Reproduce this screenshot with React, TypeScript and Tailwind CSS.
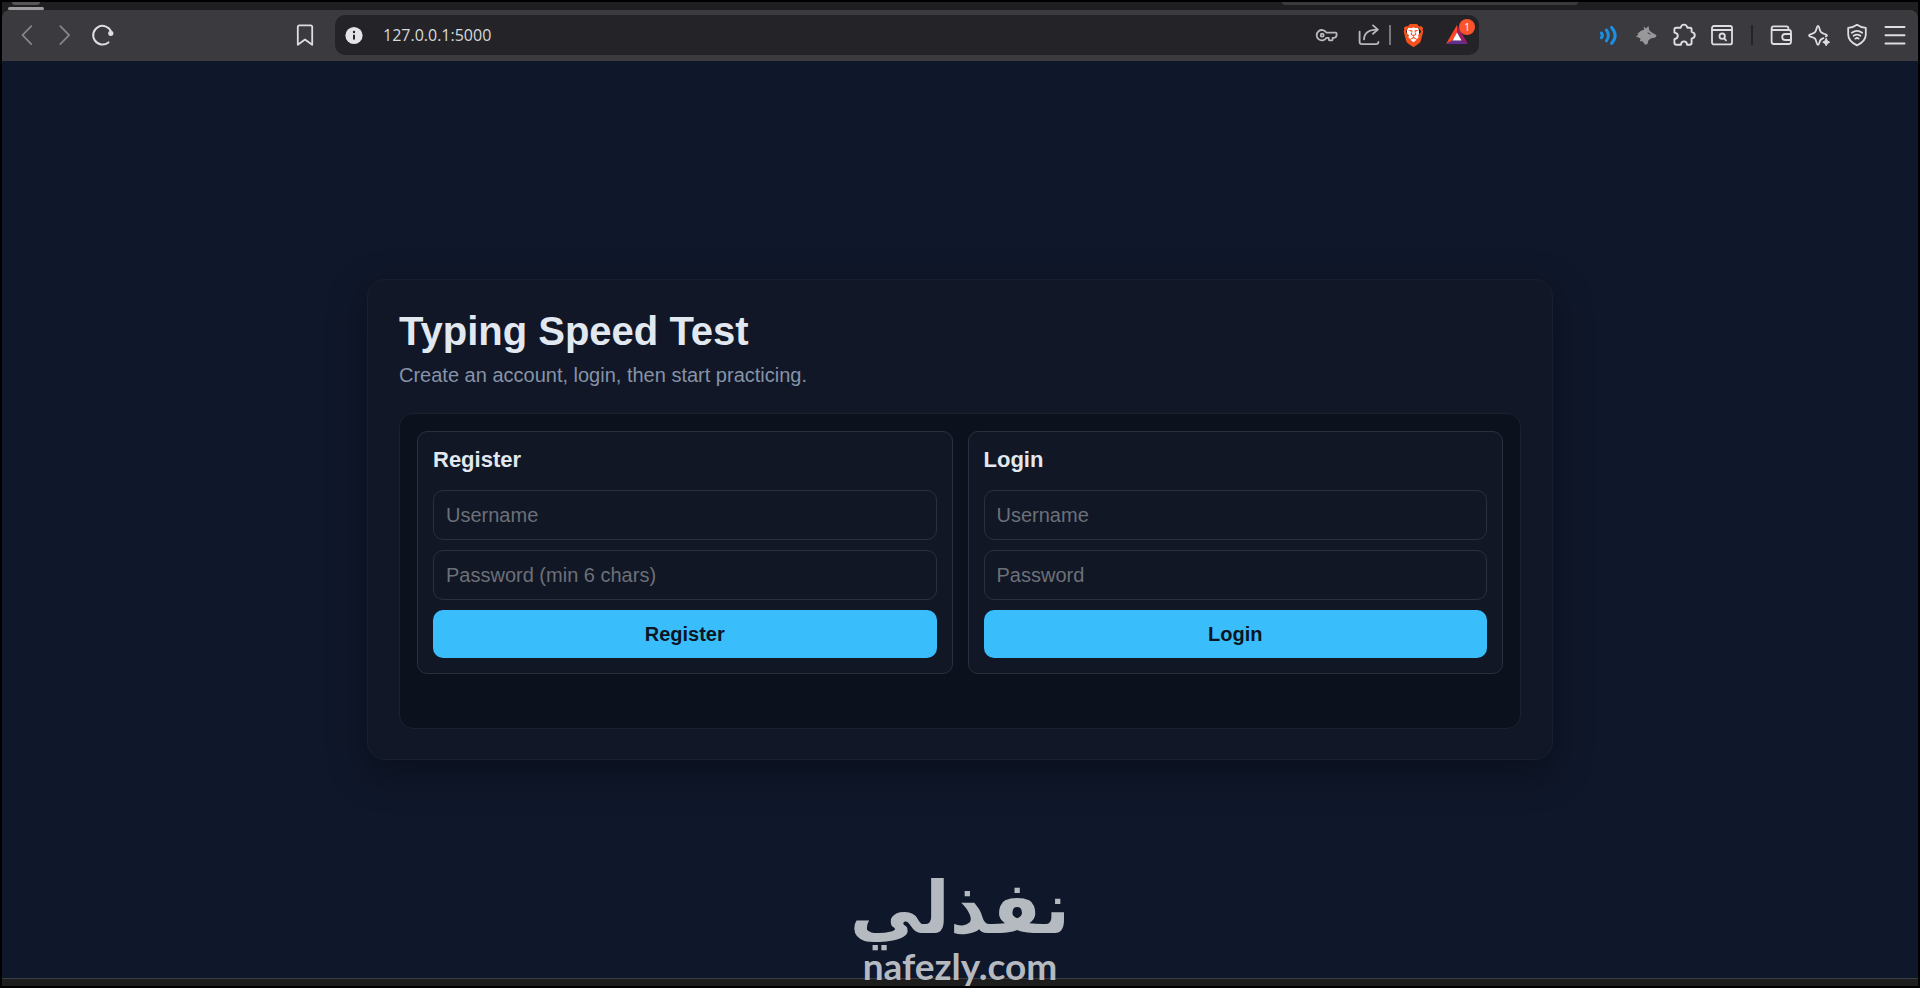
/**
 * App.tsx
 * Typing Speed Test: register / login screen inside the browser window.
 */

import React, { useState } from 'react';
import { SiBrave } from 'react-icons/si';

const TOOL_BUTTON = 'flex h-10 w-[38px] shrink-0 items-center justify-center text-[#dedee2]';

interface IconProps {
  children: React.ReactNode;
  className?: string;
  strokeWidth?: number;
}

const Icon: React.FC<IconProps> = ({ children, className = '', strokeWidth = 1.7 }) => (
  <svg
    viewBox="0 0 24 24"
    className={`h-6 w-6 ${className}`}
    fill="none"
    stroke="currentColor"
    strokeWidth={strokeWidth}
    strokeLinecap="round"
    strokeLinejoin="round"
    aria-hidden="true"
  >
    {children}
  </svg>
);

const TabStrip: React.FC = () => (
  <div className="flex h-2 items-start justify-between bg-[#1f1f22]">
    <div className="ml-1.5 w-9">
      <div className="mx-1 h-[3px] rounded-b bg-[#56565a]" />
      <div className="mt-0.5 h-[3px] rounded-sm bg-[#9b9b9e]" />
    </div>
    <div className="mr-[340px] h-[3px] w-[296px] rounded-b-lg bg-[#3b3b3f]" />
  </div>
);

const AddressBar: React.FC = () => (
  <div className="flex h-10 min-w-0 flex-1 items-center rounded-[10px] bg-[#242428]">
    <button type="button" aria-label="Site information" className={TOOL_BUTTON}>
      <Icon>
        <circle cx="12" cy="12.5" r="8.6" fill="#e4e4e8" stroke="none" />
        <path d="M12 11.8v4.6" stroke="#242428" strokeWidth="2" strokeLinecap="butt" />
        <circle cx="12" cy="9" r="1.2" fill="#242428" stroke="none" />
      </Icon>
    </button>
    <input
      aria-label="Address"
      defaultValue="127.0.0.1:5000"
      className="min-w-0 flex-1 bg-transparent pl-2.5 font-['Open_Sans',sans-serif] text-base text-[#d8d8dc] outline-none"
    />
    <button type="button" aria-label="Passwords" className="flex w-11 shrink-0 items-center justify-center text-[#b9b9bd]">
      <Icon strokeWidth={1.8}>
        <path d="M11.4 9.6A5.2 5.2 0 1 0 11.4 14.8H13.8V16.4Q13.8 17.4 14.8 17.4H16.6Q17.6 17.4 17.6 16.4V14.8H19Q21.6 14.4 21.6 12V10.6Q21.6 9.6 20.6 9.6Z" />
        <circle cx="7.2" cy="12.2" r="1.5" />
      </Icon>
    </button>
    <button type="button" aria-label="Share" className="flex w-10 shrink-0 items-center justify-center text-[#b9b9bd]">
      <Icon strokeWidth={1.8}>
        <path d="M2.6 8.6V18.8Q2.6 21.2 5 21.2H19Q21.4 21.2 21.4 18.8" />
        <path d="M7 16.4C7.2 10.2 11.4 6.6 20.4 6.6" />
        <path d="M16 2.4 20.8 6.6 16 10.8" />
      </Icon>
    </button>
    <span className="h-5 w-0.5 shrink-0 bg-[#77777b]" />
    <button type="button" aria-label="Shields" className="flex w-11 shrink-0 items-center justify-center">
      <span className="relative flex h-6 w-6 items-center justify-center">
        <span className="absolute inset-x-1.5 inset-y-1 rounded bg-white" />
        <SiBrave className="relative h-[23px] w-[23px] text-[#f4511e]" />
      </span>
    </button>
    <button type="button" aria-label="Rewards" className="flex w-11 shrink-0 items-center justify-center">
      <span className="relative flex">
        <svg viewBox="0 0 24 24" className="h-6 w-6" aria-hidden="true">
          <path d="M12 2 1 21 7.5 17.5 12 9.5Z" fill="#ff4724" />
          <path d="M12 2 23 21 16.5 17.5 12 9.5Z" fill="#9e1f63" />
          <path d="M1 21H23L16.5 17.5H7.5Z" fill="#662d91" />
          <path d="M12 9.5 7.5 17.5H16.5Z" fill="#fff" />
        </svg>
        <span className="absolute -top-1 left-3.5 flex h-4 w-4 items-center justify-center rounded-full bg-[#fb542b] font-['Open_Sans',sans-serif] text-[10px] leading-none text-white">
          1
        </span>
      </span>
    </button>
  </div>
);

const Toolbar: React.FC = () => (
  <header className="flex h-[51px] items-center rounded-t-lg bg-[#3b3b3f] pb-1.5 pt-[5px]">
    <nav aria-label="Navigation" className="flex w-[333px] shrink-0 items-center pl-1.5 pr-[11px]">
      <button type="button" aria-label="Back" className={TOOL_BUTTON}>
        <Icon className="text-[#87878b]"><path d="M16.3 3.2 7.5 12.2 16.3 21.2" /></Icon>
      </button>
      <button type="button" aria-label="Forward" className={TOOL_BUTTON}>
        <Icon className="text-[#87878b]"><path d="M7.3 3.2 16.1 12.2 7.3 21.2" /></Icon>
      </button>
      <button type="button" aria-label="Reload" className={TOOL_BUTTON}>
        <Icon strokeWidth={2}>
          <path d="M20 8.4A9.3 9.3 0 1 0 17.4 19.4" />
          <circle cx="19.8" cy="10.3" r="2.6" fill="currentColor" stroke="none" />
        </Icon>
      </button>
      <button type="button" aria-label="Bookmark" className={`${TOOL_BUTTON} ml-auto`}>
        <Icon strokeWidth={1.8}><path d="M4.8 4Q4.8 2.4 6.4 2.4H17.6Q19.2 2.4 19.2 4V21.8L12 16.6 4.8 21.8Z" /></Icon>
      </button>
    </nav>

    <AddressBar />

    <div className="flex w-[439px] shrink-0 items-center justify-end pr-1">
      <button type="button" aria-label="Read aloud" className={TOOL_BUTTON}>
        <Icon className="text-[#1a8fe3]" strokeWidth={3}>
          <path d="M5.4 10Q7.4 12.4 5.4 14.8" />
          <path d="M10.4 7Q14.4 12.4 10.4 17.8" />
          <path d="M15.6 4.4Q22.6 12.4 15.6 20.4" />
        </Icon>
      </button>
      <button type="button" aria-label="Wallet extension" className={TOOL_BUTTON}>
        <Icon className="text-[#98989b]">
          <path
            fill="currentColor"
            stroke="none"
            d="M2 13.6 4.4 11.6 3.4 10.8 7 7.8 10 6.8 9.8 3.4 12 5.6 14.4 3 15.4 7.4 17.8 9.6 22.6 12.2 21.4 14.6 16.6 15.6 14.2 17.8 13.6 21 11 21.8 8.8 18.6 5.8 18 6.6 15.4Z"
          />
          <path d="M14 10 16 11" stroke="#3b3b3f" strokeWidth="1" />
        </Icon>
      </button>
      <button type="button" aria-label="Extensions" className={TOOL_BUTTON}>
        <Icon strokeWidth={1.9}>
          <path d="M4.2 4.8H8.6Q9.4 1.6 12 1.6T15.4 4.8H18Q19.6 4.8 19.6 6.4V8.8Q22.8 9.6 22.8 12.2T19.6 15.6V19.8Q19.6 21.8 17.8 21.8H15.2Q14.8 18.4 12 18.4T8.8 21.8H4.4Q2.4 21.8 2.4 19.8V16.2Q5.8 15.6 5.8 12.8T2.4 9.6V6.6Q2.4 4.8 4.2 4.8Z" />
        </Icon>
      </button>
      <button type="button" aria-label="Search tabs" className={TOOL_BUTTON}>
        <Icon strokeWidth={1.8}>
          <rect x="2" y="3" width="20" height="18.4" rx="2" />
          <path d="M2.4 7H21.6" />
          <circle cx="12.2" cy="13.2" r="2.7" />
          <path d="M14.2 15.4 16 17.4" />
        </Icon>
      </button>
      <span className="flex w-[21px] shrink-0 justify-center">
        <span className="h-5 w-0.5 bg-[#242428]" />
      </span>
      <button type="button" aria-label="Wallet" className={TOOL_BUTTON}>
        <Icon strokeWidth={1.8}>
          <path d="M2.6 5.4Q2.6 3.4 4.6 3.4H17.4Q19.4 3.4 19.4 5.4V7H4.4Q2.6 7 2.6 5.4V18.8Q2.6 21 4.8 21H19.8Q22 21 22 18.8V9.2Q22 7 19.8 7" />
          <path d="M22 11H16.2A3 3 0 0 0 16.2 17H22Z" />
        </Icon>
      </button>
      <button type="button" aria-label="Assistant" className={TOOL_BUTTON}>
        <Icon strokeWidth={1.8}>
          <path d="M16.4 15.2Q13.4 16 12.6 19Q11.8 21.8 11 21.8 10.2 21.8 9.4 19C8.6 15.6 8 15 4.8 14.2Q2 13.2 2 12.4 2 11.6 4.8 10.8C8 9.8 8.6 9.2 9.4 6Q10.2 2.8 11 2.8 11.8 2.8 12.6 6C13.4 9.2 14 9.8 17.2 10.8Q20 11.6 20 12.4 20 13 18.8 13.4" />
          <path
            d="M19.2 15.6Q19.8 18.4 22.6 19.2 19.8 20 19.2 22.8 18.6 20 15.8 19.2 18.6 18.4 19.2 15.6Z"
            fill="currentColor"
            strokeWidth="1"
          />
        </Icon>
      </button>
      <button type="button" aria-label="VPN" className={TOOL_BUTTON}>
        <Icon strokeWidth={1.8}>
          <path d="M12 1.8C14.4 3.6 17.4 4.6 20.8 4.8V11.6C20.8 16.6 17.4 20 12 22.4 6.6 20 3.2 16.6 3.2 11.6V4.8C6.6 4.6 9.6 3.6 12 1.8Z" />
          <path d="M6.8 9.8Q12 6 17.2 9.8" />
          <path d="M8.6 12.8Q12 10.4 15.4 12.8" />
          <path d="M10.4 15.6Q12 14.4 13.6 15.6" />
        </Icon>
      </button>
      <button type="button" aria-label="Menu" className={TOOL_BUTTON}>
        <Icon strokeWidth={2}><path d="M2.5 4H21.5M2.5 12.2H21.5M2.5 20.4H21.5" /></Icon>
      </button>
    </div>
  </header>
);

interface AuthFormProps {
  title: string;
  passwordHint: string;
}

const FIELD =
  'h-[50px] w-full rounded-[10px] border border-[#293140] bg-[#111725] px-3 text-xl text-slate-200 placeholder:text-[#6c7079] outline-none';

const AuthForm: React.FC<AuthFormProps> = ({ title, passwordHint }) => {
  const [username, setUsername] = useState('');
  const [password, setPassword] = useState('');

  return (
    <form
      onSubmit={(e) => e.preventDefault()}
      className="min-w-0 rounded-[10px] border border-[#293140] bg-[#111725] p-[15px]"
    >
      <h2 className="mb-[18px] text-[22px] font-bold leading-[25px] text-slate-200">{title}</h2>
      <div className="flex flex-col gap-2.5">
        <input
          aria-label="Username"
          value={username}
          onChange={(e) => setUsername(e.target.value)}
          placeholder="Username"
          className={FIELD}
        />
        <input
          aria-label="Password"
          type="password"
          value={password}
          onChange={(e) => setPassword(e.target.value)}
          placeholder={passwordHint}
          className={FIELD}
        />
        <button type="submit" className="h-12 w-full rounded-[10px] bg-[#3abdfb] text-xl font-bold text-[#0b1524]">
          {title}
        </button>
      </div>
    </form>
  );
};

const Watermark: React.FC = () => (
  <div className="pointer-events-none absolute inset-x-0 bottom-0 flex flex-col items-center pb-0.5 text-[#b5bac1]">
    <span lang="ar" dir="rtl" className="font-['DejaVu_Sans',sans-serif] text-[72px] font-bold leading-[80px]">
      نفذلي
    </span>
    <span className="font-['Lato',sans-serif] text-[37px] font-bold leading-9">nafezly.com</span>
  </div>
);

export default function App() {
  return (
    <div className="relative flex min-h-screen flex-col border-2 border-black bg-[#1f1f22] font-['Liberation_Sans',Arial,sans-serif]">
      <TabStrip />
      <Toolbar />

      <main className="flex flex-1 flex-col items-center justify-center bg-[#0f172a] px-6">
        <section className="w-full max-w-[1186px] rounded-[18px] border border-[#182030] bg-[#111726] p-[31px] pb-[30px] shadow-[0_12px_38px_rgba(0,0,0,0.35)]">
          <h1 className="text-[40px] font-bold leading-10 text-slate-200">Typing Speed Test</h1>
          <p className="mb-6 mt-2.5 text-xl leading-7 text-[#8593a8]">
            Create an account, login, then start practicing.
          </p>

          <div className="rounded-[14px] border border-[#1a2230] bg-[#0b111d] p-[17px]">
            <div className="grid grid-cols-2 gap-[15px]">
              <AuthForm title="Register" passwordHint="Password (min 6 chars)" />
              <AuthForm title="Login" passwordHint="Password" />
            </div>
            <p aria-live="polite" className="mt-3 min-h-[25px] text-base text-[#8593a8]" />
          </div>
        </section>
      </main>

      <footer className="h-2 border-t border-[#3a3d42] bg-[#1c1d1c]" />
      <Watermark />
    </div>
  );
}
